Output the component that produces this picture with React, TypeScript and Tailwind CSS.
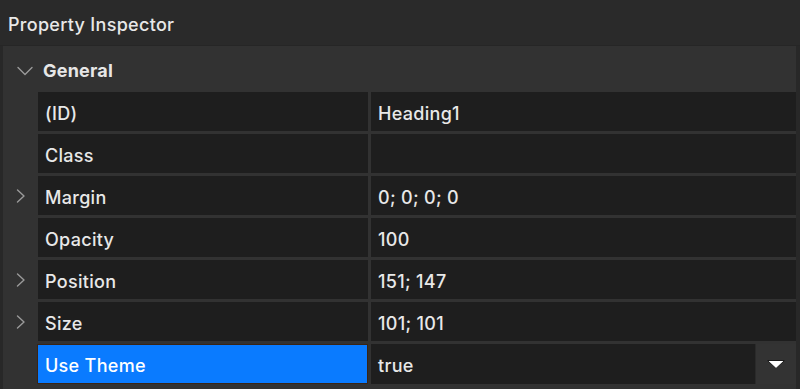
import React from "react";

const rows: { label: string; value: string; expandable?: boolean }[] = [
  { label: "(ID)", value: "Heading1" },
  { label: "Class", value: "" },
  { label: "Margin", value: "0; 0; 0; 0", expandable: true },
  { label: "Opacity", value: "100" },
  { label: "Position", value: "151; 147", expandable: true },
  { label: "Size", value: "101; 101", expandable: true },
];

function ChevronRight() {
  return (
    <svg width="12" height="16" viewBox="0 0 12 16" fill="none">
      <path d="M2.5 2 L9 8 L2.5 14" stroke="#9a9a9a" strokeWidth="1.4" strokeLinecap="round" strokeLinejoin="round" />
    </svg>
  );
}

function ChevronDown() {
  return (
    <svg width="18" height="12" viewBox="0 0 18 12" fill="none">
      <path d="M2 2.5 L9 9.5 L16 2.5" stroke="#9a9a9a" strokeWidth="1.4" strokeLinecap="round" strokeLinejoin="round" />
    </svg>
  );
}

export default function App() {
  return (
    <div
      className="w-[800px] h-[389px] overflow-hidden bg-[#323232] text-[#e8e8e8] flex flex-col font-medium"
      style={{ fontFamily: "Inter, 'Liberation Sans', sans-serif" }}
    >
      <div className="h-[46px] shrink-0 bg-[#2a2a2a] border-b border-[#262626] flex items-center pl-[8px] pt-[4px] text-[18px] tracking-[0.3px]">
        Property Inspector
      </div>
      <div className="flex-1 border-l-[3px] border-r-[4px] border-[#282828] bg-[#323232] flex flex-col">
        <div className="h-[46px] shrink-0 flex items-center pt-[3px]">
          <div className="w-[40px] flex justify-center pl-[4px]">
            <ChevronDown />
          </div>
          <span className="text-[18px] font-bold text-[#e6e6e6] tracking-[0.2px]">General</span>
        </div>
        <div className="flex flex-col gap-[3px]">
          {rows.map((r) => (
            <div key={r.label} className="flex h-[39px]">
              <div className="w-[35px] shrink-0 flex items-center justify-center pl-[1px]">
                {r.expandable ? <ChevronRight /> : null}
              </div>
              <div className="w-[330px] shrink-0 bg-[#1e1e1e] flex items-center pl-[7px] text-[18px] pt-[3px] tracking-[0.3px]">
                {r.label}
              </div>
              <div className="w-[3px] shrink-0" />
              <div className="flex-1 bg-[#1e1e1e] flex items-center pl-[7px] text-[18px] pt-[3px] tracking-[0.3px]">
                {r.value}
              </div>
            </div>
          ))}
          <div className="flex h-[40px]">
            <div className="w-[34px] shrink-0" />
            <div className="w-[331px] shrink-0 bg-[#0a7bff] border border-[#3a2414] flex items-center pl-[7px] text-[18px] text-white pt-[3px] tracking-[0.3px]">
              Use Theme
            </div>
            <div className="w-[3px] shrink-0" />
            <div className="w-[385px] shrink-0 bg-[#1e1e1e] border-r border-[#2a2a2a] flex items-center pl-[7px] text-[18px] pt-[3px] tracking-[0.3px]">
              true
            </div>
            <div className="flex-1 bg-[#333333] flex items-center justify-center">
              <svg width="20" height="11" viewBox="0 0 20 11">
                <path d="M1.5 1.5 L18.5 1.5 L10 9.5 Z" fill="#ffffff" stroke="#1a1a1a" strokeWidth="1" strokeLinejoin="round" />
              </svg>
            </div>
          </div>
        </div>
      </div>
    </div>
  );
}
